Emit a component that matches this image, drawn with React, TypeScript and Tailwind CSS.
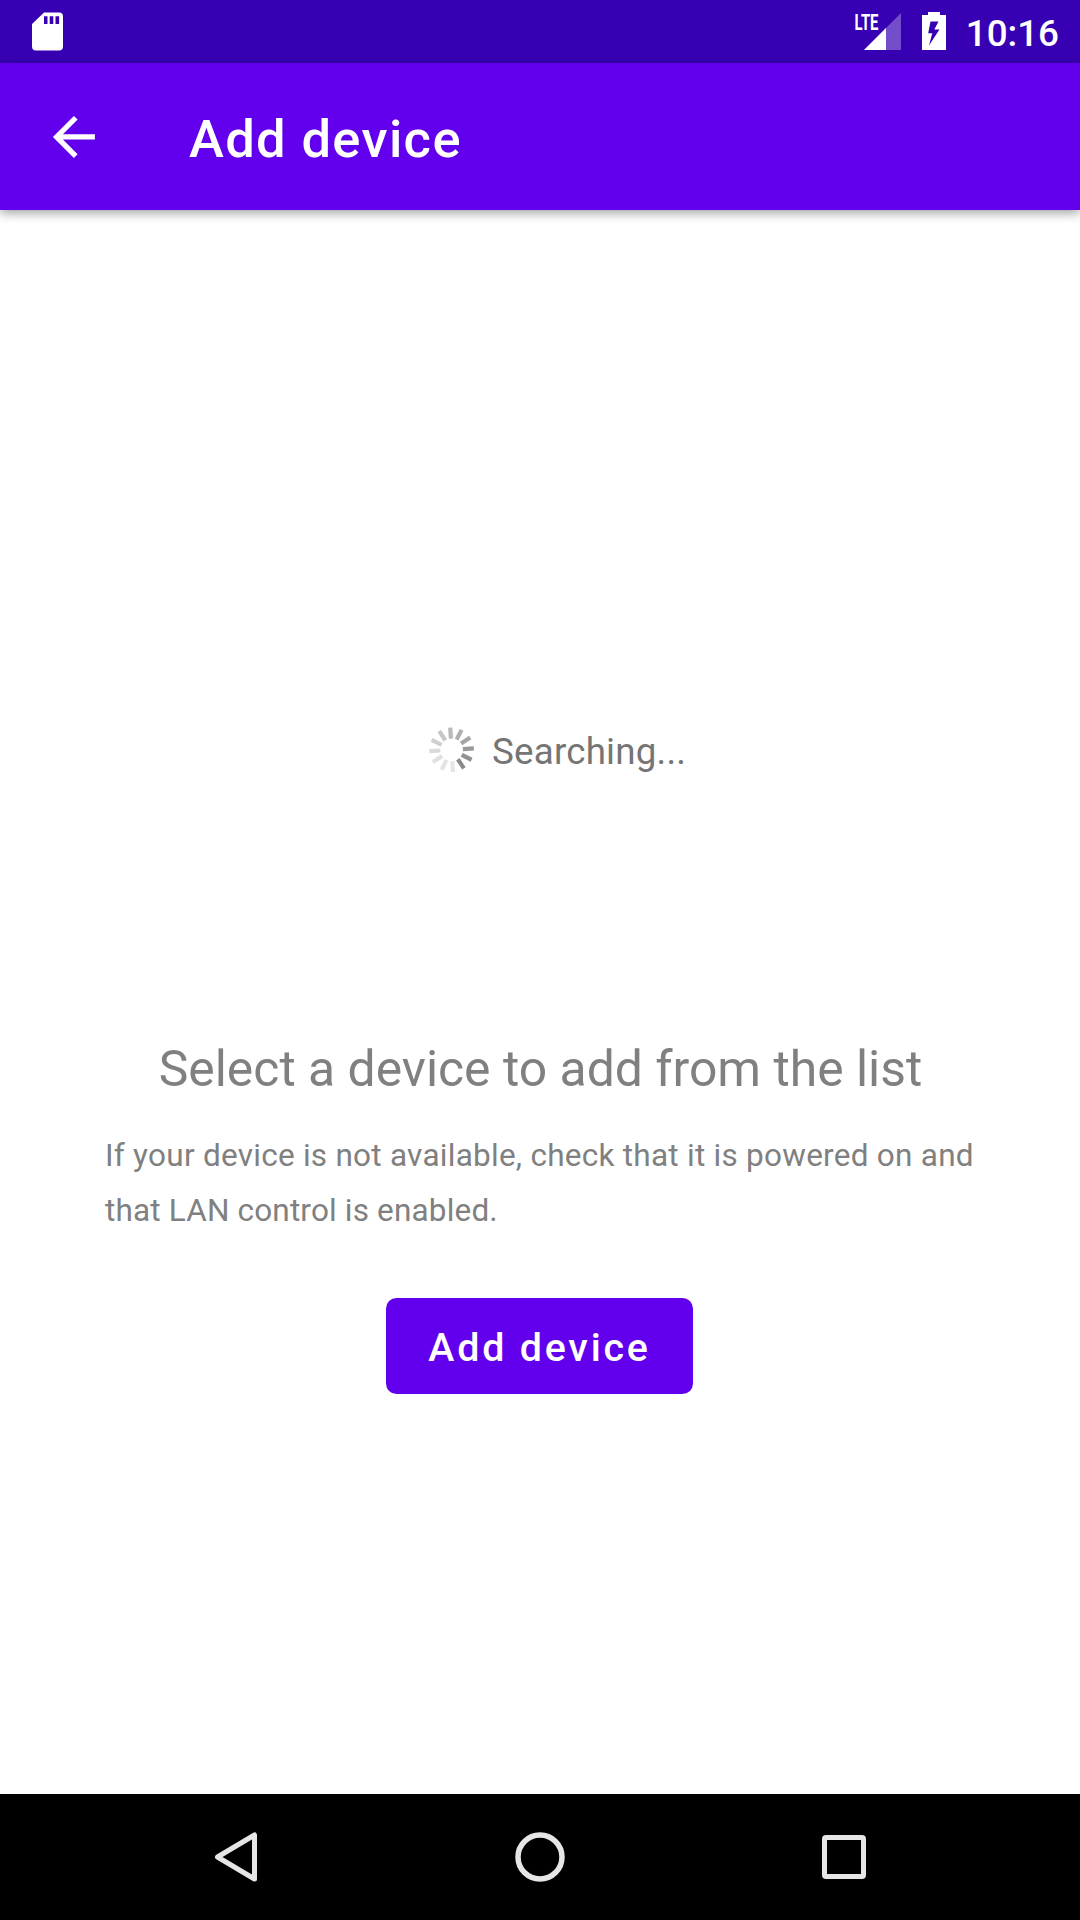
const spokes = [
  "#b9b9b9", "#b0b0b0", "#a5a5a5", "#999999", "#919191", "#8b8b8b",
  "#e6e6e6", "#e4e4e4", "#e0e0e0", "#dadada", "#d0d0d0", "#c6c6c6",
];

function StatusBar() {
  return (
    <div className="flex h-[63px] items-center bg-[#3700b3] pl-8 pr-[21px] text-white">
      <svg width="31" height="39" viewBox="0 0 31 39">
        <path
          fill="#fff"
          fillRule="evenodd"
          d="M12 .5H27Q31 .5 31 4.500V34.500Q31 38.500 27 38.500H4Q0 38.500 0 34.500V12ZM12 4.300V12H15.500V4.300ZM17.700 4.300V12H21.300V4.300ZM23.500 4.300V12H27.100V4.300Z"
        />
      </svg>
      <svg width="48" height="40" viewBox="0 0 48 40" className="ml-auto overflow-visible">
        <text
          x="0.5" y="17.500" fill="#fff" fontFamily="Roboto" fontWeight="700" fontSize="22.500"
          textLength="24" lengthAdjust="spacingAndGlyphs"
        >
          LTE
        </text>
        <path d="M47 1V38H10Z" fill="#fff" fillOpacity=".3" />
        <path d="M32 16V38H10Z" fill="#fff" />
      </svg>
      <svg width="24" height="38" viewBox="0 0 24 38" className="ml-5 mb-px">
        <path
          fill="#fff"
          fillRule="evenodd"
          d="M6 0H18V3H24V38H0V3H6ZM8.500 9.500L6.200 21.300H10.300L7 33.500L17.500 17.500H12.300L16.500 9.500Z"
        />
      </svg>
      <span className="ml-[19.5px] mt-[5px] text-[36.75px] leading-none font-medium">10:16</span>
    </div>
  );
}

function AppBar() {
  return (
    <header className="relative flex h-[147px] items-center bg-[#6200ee] pl-[42px] text-white shadow-[0_3px_10px_rgba(0,0,0,0.38)]">
      <svg width="63" height="63" viewBox="0 0 24 24">
        <path fill="#fff" transform="translate(0.150 0.150)" d="M20 11H7.830l5.590-5.590L12 4l-8 8 8 8 1.410-1.410L7.830 13H20v-2z" />
      </svg>
      <h1 className="ml-[84px] mt-1.5 text-[52.5px] leading-none font-medium tracking-[1.35px]">Add device</h1>
    </header>
  );
}

function Spinner() {
  return (
    <svg width="46" height="46" viewBox="-23.600 -22.800 46 46">
      {spokes.map((color, i) => (
        <rect key={i} x="-2.100" y="-22.300" width="4.200" height="11" fill={color} transform={`rotate(${i * 30 - 3.500})`} />
      ))}
    </svg>
  );
}

function NavigationBar() {
  return (
    <nav className="flex h-[126px] items-center bg-black pl-[214px]">
      <svg width="44" height="52" viewBox="0 0 44 52">
        <path d="M40.500 4V48L3.500 26Z" fill="none" stroke="#e6e6e6" strokeWidth="5" strokeLinejoin="round" />
      </svg>
      <svg width="50" height="50" viewBox="0 0 50 50" className="ml-[257px]">
        <circle cx="25" cy="25" r="22" fill="none" stroke="#e6e6e6" strokeWidth="5.500" />
      </svg>
      <svg width="44" height="44" viewBox="0 0 44 44" className="ml-[257px]">
        <rect x="2.500" y="2.500" width="39" height="39" rx="1.500" fill="none" stroke="#e6e6e6" strokeWidth="5" />
      </svg>
    </nav>
  );
}

export default function App() {
  return (
    <div className="flex h-[1920px] w-[1080px] flex-col bg-white font-['Roboto',sans-serif]">
      <StatusBar />
      <AppBar />
      <main className="flex flex-1 flex-col pt-[515px]">
        <div className="flex h-[50px] items-center pl-[428px]">
          <Spinner />
          <span className="ml-[18px] mt-1 text-[36.75px] leading-none tracking-[0.2px] text-[#757575]">Searching...</span>
        </div>
        <div className="flex flex-col items-center pt-[262px] text-[#808080]">
          <h2 className="ml-px text-[49.85px] leading-[64px] whitespace-nowrap">Select a device to add from the list</h2>
          <p className="mt-[27px] w-[870px] text-[31.5px] leading-[55px] tracking-[0.26px]">
            If your device is not available, check that it is powered on and<br />
            <span className="tracking-[0.17px]">that LAN control is enabled.</span>
          </p>
          <button className="mt-[60px] mr-px h-24 w-[307px] rounded-[10.5px] bg-[#6200ee] pt-1 text-[39.375px] leading-none font-medium tracking-[2.8px] text-white">
            Add device
          </button>
        </div>
      </main>
      <NavigationBar />
    </div>
  );
}
